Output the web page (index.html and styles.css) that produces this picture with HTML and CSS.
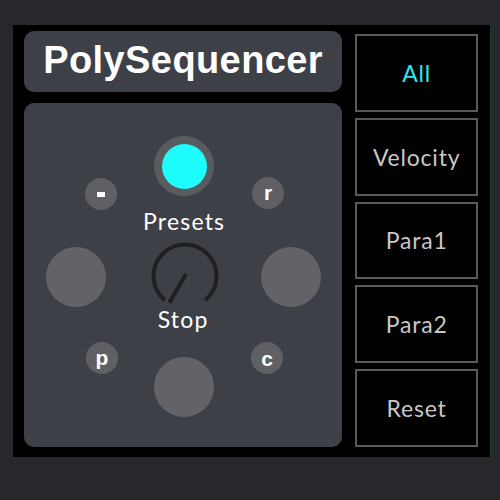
FILE: index.html
```html
<!DOCTYPE html>
<html>
<head>
<meta charset="utf-8">
<link rel="stylesheet" href="styles.css">
</head>
<body>
<div class="device">
  <div class="left">
    <div class="title">PolySequencer</div>
    <div class="panel">
      <div class="preset-ring"><div class="preset-dot"></div></div>
      <div class="small s-minus"><span class="minus"></span></div>
      <div class="small s-r">r</div>
      <div class="label presets">Presets</div>
      <div class="big b-left"></div>
      <div class="big b-right"></div>
      <svg class="knob" width="80" height="80" viewBox="0 0 80 80">
        <path d="M19.75 64.13 A31.5 31.5 0 1 1 60.25 64.13" fill="none" stroke="#1f1f22" stroke-width="4"/>
        <line x1="41" y1="38" x2="24.5" y2="66.8" stroke="#1f1f22" stroke-width="4"/>
      </svg>
      <div class="label stop">Stop</div>
      <div class="small s-p">p</div>
      <div class="small s-c">c</div>
      <div class="big b-bottom"></div>
    </div>
  </div>
  <div class="right">
    <div class="btn active">All</div>
    <div class="btn">Velocity</div>
    <div class="btn">Para1</div>
    <div class="btn">Para2</div>
    <div class="btn">Reset</div>
  </div>
</div>
</body>
</html>
```
FILE: styles.css
```css
html, body {
  margin: 0;
  padding: 0;
  background: #28272c;
  width: 500px;
  height: 500px;
  overflow: hidden;
}
.device {
  position: absolute;
  left: 13px;
  top: 25px;
  width: 478px;
  height: 432px;
  box-sizing: border-box;
  background: #000;
  border-right: 1px solid #1c3c3c;
  padding: 6px 12px 10px 11px;
  display: flex;
  gap: 13px;
}
.left {
  width: 319px;
  display: flex;
  flex-direction: column;
  gap: 11px;
}
.title {
  height: 61px;
  background: #3e4047;
  border-radius: 10px;
  color: #fff;
  font-family: "Liberation Sans", Arial, sans-serif;
  font-weight: bold;
  font-size: 38px;
  letter-spacing: 0.4px;
  display: flex;
  align-items: center;
  justify-content: center;
  padding-bottom: 2px;
  box-sizing: border-box;
}
.panel {
  position: relative;
  flex: 1;
  background: #3e4047;
  border-radius: 10px;
}
.preset-ring {
  position: absolute;
  left: 130px;
  top: 33px;
  width: 60px;
  height: 60px;
  border-radius: 50%;
  background: #5a5b5f;
  display: flex;
  align-items: center;
  justify-content: center;
}
.preset-dot {
  width: 45px;
  height: 45px;
  border-radius: 50%;
  background: #1dfdfd;
}
.small {
  position: absolute;
  width: 32px;
  height: 32px;
  border-radius: 50%;
  background: #5f6064;
  color: #fff;
  font-family: "Liberation Sans", Arial, sans-serif;
  font-weight: bold;
  font-size: 21px;
  display: flex;
  align-items: center;
  justify-content: center;
  line-height: 1;
}
.minus {
  width: 8px;
  height: 5px;
  background: #fff;
}
.s-minus { left: 61px; top: 75px; }
.s-r { left: 228px; top: 74px; padding-bottom: 2px; box-sizing: border-box; }
.s-p { left: 62px; top: 239px; padding-bottom: 2px; box-sizing: border-box; }
.s-c { left: 227px; top: 239px; }
.big {
  position: absolute;
  width: 60px;
  height: 60px;
  border-radius: 50%;
  background: #636367;
}
.b-left { left: 22px; top: 144px; }
.b-right { left: 237px; top: 144px; }
.b-bottom { left: 130px; top: 254px; }
.knob {
  position: absolute;
  left: 120.5px;
  top: 132.5px;
}
.label {
  position: absolute;
  left: 0;
  right: 0;
  text-align: center;
  color: #fff;
  font-family: Lato, "Noto Sans", sans-serif;
  font-size: 23px;
  letter-spacing: 1.2px;
  line-height: 1;
}
.presets { top: 107px; left: 2px; }
.stop { top: 205px; }
.right {
  width: 123px;
  padding-top: 3px;
  display: flex;
  flex-direction: column;
  gap: 6px;
}
.btn {
  height: 78px;
  box-sizing: border-box;
  border: 2px solid #5a5a5a;
  background: #000;
  color: #c8c8c8;
  font-family: Lato, "Noto Sans", sans-serif;
  font-size: 23px;
  letter-spacing: 0.8px;
  display: flex;
  align-items: center;
  justify-content: center;
}
.btn.active { color: #2de8ec; }
```
